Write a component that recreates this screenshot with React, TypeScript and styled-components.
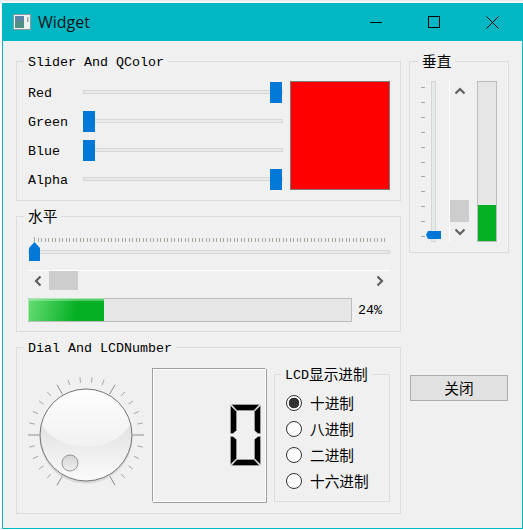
import React from "react";
import styled, { createGlobalStyle } from "styled-components";

const Global = createGlobalStyle`
  html, body { margin: 0; padding: 0; background: #fff; }
  body { font-family: "Noto Sans CJK SC", "Liberation Sans", sans-serif; color: #000; }
`;

const Page = styled.div`
  width: 523px;
  height: 530px;
  padding: 3px 0 1px 2px;
  box-sizing: border-box;
  background: linear-gradient(#e6e6e6, #fff 3px);
`;

const Window = styled.div`
  width: 521px;
  height: 526px;
  box-sizing: border-box;
  border: 1px solid #00b7c3;
  border-top: 0;
  background: #f0f0f0;
  display: flex;
  flex-direction: column;
`;

const TitleBar = styled.header`
  height: 38px;
  flex: none;
  background: #00b7c3;
  display: flex;
  align-items: center;
  padding-left: 10px;
`;

const TitleText = styled.span`
  font: 400 16px/20px "Open Sans", "Liberation Sans", sans-serif;
  margin-left: 7px;
  color: #04141a;
  flex: 1;
`;

const WinButton = styled.button`
  width: 58.5px;
  height: 38px;
  border: 0;
  padding: 0;
  background: none;
  display: flex;
  align-items: center;
  justify-content: center;
`;

const Body = styled.main`
  flex: 1;
  display: flex;
  gap: 8px;
  padding: 20px 0 0 13px;
`;

const Column = styled.div<{ $w: number; $gap?: number }>`
  width: ${(p) => p.$w}px;
  display: flex;
  flex-direction: column;
  gap: ${(p) => p.$gap ?? 0}px;
`;

const Group = styled.section<{ $h: number; $pad: string }>`
  position: relative;
  box-sizing: border-box;
  height: ${(p) => p.$h}px;
  padding: ${(p) => p.$pad};
  border: 1px solid #dcdcdc;
`;

const GroupTitle = styled.span<{ $left?: number }>`
  position: absolute;
  top: -11px;
  left: ${(p) => p.$left ?? 7}px;
  padding: 0 4px;
  height: 19px;
  line-height: 19px;
  background: #f0f0f0;
  font-size: 14.67px;
  white-space: nowrap;
`;

const Mono = styled.span`
  font-family: "Liberation Mono", monospace;
  font-weight: 400;
  font-size: 13.33px;
`;

const TitleMono = styled(Mono)`
  position: relative;
  top: -1px;
`;

const ColorRow = styled.div`
  display: flex;
  gap: 7px;
`;

const SliderStack = styled.div`
  display: flex;
  flex-direction: column;
  gap: 8px;
`;

const SliderRow = styled.div`
  display: flex;
  align-items: center;
  height: 21px;
`;

const SliderLabel = styled(Mono)`
  width: 55px;
  position: relative;
  top: 2px;
`;

const Track = styled.div`
  position: relative;
  width: 200px;
  height: 4px;
  box-sizing: border-box;
  background: #e7eaea;
  border: 1px solid #d6d6d6;
`;

const Handle = styled.div<{ $max: boolean }>`
  position: absolute;
  top: -9px;
  left: ${(p) => (p.$max ? "186px" : "-1px")};
  width: 12px;
  height: 21px;
  background: #0078d7;
`;

const Swatch = styled.div`
  width: 100px;
  height: 109px;
  box-sizing: border-box;
  background: #ff0000;
  border: 1px solid #7a7a7a;
`;

const VRow = styled.div`
  display: flex;
`;

const VSliderArt = styled.svg`
  display: block;
  flex: none;
  width: 28px;
  height: 161px;
`;

const VScroll = styled.div`
  width: 20px;
  height: 161px;
  border-left: 1px solid #fff;
  display: flex;
  flex-direction: column;
`;

const HScroll = styled.div`
  height: 20px;
  margin-top: 9px;
  border-top: 1px solid #fff;
  display: flex;
`;

const Arrow = styled.div`
  flex: none;
  width: 20px;
  height: 20px;
  display: flex;
  align-items: center;
  justify-content: center;
`;

const VTrough = styled.div`
  flex: 1;
  display: flex;
  flex-direction: column;
  justify-content: flex-end;
`;

const VThumb = styled.div`
  width: 19px;
  height: 22px;
  background: #cdcdcd;
`;

const HTrough = styled.div`
  flex: 1;
  padding-left: 1px;
`;

const HThumb = styled.div`
  width: 29px;
  height: 19px;
  background: #cdcdcd;
`;

const VBar = styled.div`
  width: 20px;
  height: 161px;
  margin-left: 7px;
  box-sizing: border-box;
  border: 1px solid #bcbcbc;
  background: #e6e6e6;
  display: flex;
  flex-direction: column;
  justify-content: flex-end;
`;

const VFill = styled.div`
  height: 36px;
  background: #06b025;
`;

const HSliderWrap = styled.div`
  position: relative;
  height: 24px;
`;

const HTicks = styled.svg`
  display: block;
  width: 362px;
  height: 6px;
`;

const HTrack = styled.div`
  position: absolute;
  left: 0;
  right: 0;
  top: 13px;
  height: 4px;
  box-sizing: border-box;
  background: #e7eaea;
  border: 1px solid #d6d6d6;
`;

const HHandle = styled.svg`
  position: absolute;
  left: 1px;
  top: 5px;
  width: 11px;
  height: 19px;
`;

const BarRow = styled.div`
  display: flex;
  align-items: center;
  margin-top: 7px;
`;

const HBar = styled.div`
  width: 324px;
  height: 24px;
  box-sizing: border-box;
  border: 1px solid #bcbcbc;
  background: #e6e6e6;
`;

const HFill = styled.div`
  width: 75px;
  height: 100%;
  background:
    linear-gradient(rgba(255, 255, 255, 0.3), rgba(255, 255, 255, 0.3) 2px, transparent 2px, transparent),
    linear-gradient(100deg, #64dc72 0%, #06b025 62%);
  box-shadow: -1px 0 0 #a9e6b0, 0 -1px 0 #a9e6b0;
`;

const BarLabel = styled(Mono)`
  margin-left: 6px;
`;

const DialRow = styled.div`
  display: flex;
  align-items: flex-start;
`;

const DialArt = styled.svg`
  display: block;
  flex: none;
  width: 120px;
  height: 120px;
  margin-top: 7px;
`;

const Lcd = styled.div`
  box-sizing: border-box;
  flex: none;
  width: 114px;
  height: 134px;
  margin-left: 6px;
  border: 1px solid;
  border-color: #a0a0a0 #fff #fff #a0a0a0;
  box-shadow: inset 1px 1px 0 #fff, 1px 1px 0 #a0a0a0;
  display: flex;
  align-items: center;
  justify-content: flex-end;
  padding-right: 4px;
`;

const Digit = styled.svg`
  display: block;
  width: 31px;
  height: 62px;
`;

const BaseGroup = styled(Group)`
  flex: none;
  width: 116px;
  margin: 6px 0 0 8px;
`;

const RadioRow = styled.label`
  display: flex;
  align-items: center;
  height: 26px;
  gap: 8px;
  font-size: 14.67px;
`;

const RadioText = styled.span`
  margin-bottom: 2px;
`;

const RadioDot = styled.span<{ $on?: boolean }>`
  box-sizing: border-box;
  flex: none;
  width: 16px;
  height: 16px;
  border-radius: 50%;
  border: 1px solid #333;
  background: ${(p) => (p.$on ? "radial-gradient(circle, #333 0 5px, #fff 5.6px)" : "#fff")};
`;

const CloseButton = styled.button`
  width: 98px;
  height: 26px;
  margin: 122px 0 0 1px;
  padding: 0 0 2px;
  box-sizing: border-box;
  background: #e1e1e1;
  border: 1px solid #adadad;
  font: 400 14.67px "Noto Sans CJK SC", sans-serif;
  color: #000;
`;

const Chevron = ({ d }: { d: string }) => (
  <svg width="12" height="12" viewBox="0 0 12 12">
    <path d={d} fill="none" stroke="#606060" strokeWidth="2.2" />
  </svg>
);
const UP = "M1.5 8.5 6 4 10.5 8.5";
const DOWN = "M1.5 3.5 6 8 10.5 3.5";
const LEFT = "M8.5 1.5 4 6 8.5 10.5";
const RIGHT = "M3.5 1.5 8 6 3.5 10.5";

const rows = [
  { label: "Red", max: true },
  { label: "Green", max: false },
  { label: "Blue", max: false },
  { label: "Alpha", max: true },
];

const pol = (deg: number, r: number) => {
  const a = ((deg - 90) * Math.PI) / 180;
  return [60 + r * Math.cos(a), 60 + r * Math.sin(a)];
};

const dialTicks = Array.from({ length: 26 }, (_, i) => {
  const deg = 210 + i * 12;
  const long = i % 5 === 0;
  const [x1, y1] = pol(deg, long ? 47 : 52.5);
  const [x2, y2] = pol(deg, 58);
  return { x1, y1, x2, y2, long };
});

const VerticalSlider = () => (
  <VSliderArt viewBox="0 0 28 161">
    {Array.from({ length: 11 }, (_, i) => (
      <rect key={i} x="0" y={Math.round(6 + i * 14.9)} width="4" height="1" fill="#a8a89a" />
    ))}
    <rect x="10.5" y="0.5" width="4" height="160" fill="#e7eaea" stroke="#d6d6d6" />
    <path d="M5 154 7 150H20V158H7Z" fill="#0078d7" />
  </VSliderArt>
);

const DigitZero = () => (
  <Digit viewBox="0 0 31 62">
    <g fill="#000" stroke="#b4b4b4" strokeWidth="0.6">
      <path d="M1.5 0.5H29.5L24 6.5H7Z" />
      <path d="M0.5 1.5 6.5 7.5V26.5L3 29.5H0.5Z" />
      <path d="M30.5 1.5 24.5 7.5V26.5L28 29.5H30.5Z" />
      <path d="M0.5 32.5H3L6.5 35.5V54.5L0.5 60.5Z" />
      <path d="M30.5 32.5H28L24.5 35.5V54.5L30.5 60.5Z" />
      <path d="M7 55.5H24L29.5 61.5H1.5Z" />
    </g>
  </Digit>
);

export default function App() {
  return (
    <Page>
      <Global />
      <Window>
        <TitleBar>
          <svg width="18" height="16" viewBox="0 0 18 16">
            <rect x="0.5" y="0.5" width="17" height="15" fill="#eef2f2" stroke="#8a9a9c" />
            <rect x="2" y="2" width="9" height="12" fill="#4f8f86" />
            <rect x="2" y="2" width="9" height="5" fill="#5c83a8" />
            <rect x="14" y="3" width="1.5" height="5" fill="#9aa6a8" />
          </svg>
          <TitleText>Widget</TitleText>
          <WinButton aria-label="min">
            <svg width="12" height="12" viewBox="0 0 12 12"><path d="M0 6.5H12" stroke="#000" /></svg>
          </WinButton>
          <WinButton aria-label="max">
            <svg width="12" height="12" viewBox="0 0 12 12"><rect x="0.5" y="0.5" width="11" height="11" fill="none" stroke="#000" /></svg>
          </WinButton>
          <WinButton aria-label="close">
            <svg width="13" height="13" viewBox="0 0 13 13"><path d="M0.5 0.5 12.5 12.5M12.5 0.5 0.5 12.5" stroke="#000" /></svg>
          </WinButton>
        </TitleBar>
        <Body>
          <Column $w={385} $gap={15}>
            <Group $h={140} $pad="19px 0 0 11px">
              <GroupTitle><TitleMono>Slider And QColor</TitleMono></GroupTitle>
              <ColorRow>
                <SliderStack>
                  {rows.map((r) => (
                    <SliderRow key={r.label}>
                      <SliderLabel>{r.label}</SliderLabel>
                      <Track><Handle $max={r.max} /></Track>
                    </SliderRow>
                  ))}
                </SliderStack>
                <Swatch />
              </ColorRow>
            </Group>
            <Group $h={116} $pad="20px 10px 0 11px">
              <GroupTitle>水平</GroupTitle>
              <HSliderWrap>
                <HTicks viewBox="0 0 362 6">
                  <rect x="6" y="0" width="1" height="5" fill="#a8a89a" />
                  {Array.from({ length: 100 }, (_, i) => (
                    <rect key={i} x={Math.round(9.5 + i * 3.5)} y="1" width="1" height="4" fill="#a8a89a" />
                  ))}
                </HTicks>
                <HTrack />
                <HHandle viewBox="0 0 11 19"><path d="M5.5 0 11 6V19H0V6Z" fill="#0078d7" /></HHandle>
              </HSliderWrap>
              <HScroll>
                <Arrow><Chevron d={LEFT} /></Arrow>
                <HTrough><HThumb /></HTrough>
                <Arrow><Chevron d={RIGHT} /></Arrow>
              </HScroll>
              <BarRow>
                <HBar><HFill /></HBar>
                <BarLabel>24%</BarLabel>
              </BarRow>
            </Group>
            <Group $h={167} $pad="20px 0 0 9px">
              <GroupTitle><TitleMono>Dial And LCDNumber</TitleMono></GroupTitle>
              <DialRow>
                <DialArt viewBox="0 0 120 120">
                  <defs>
                    <linearGradient id="face" x1="0" y1="0" x2="0" y2="1">
                      <stop offset="0.45" stopColor="#e4e4e4" />
                      <stop offset="1" stopColor="#fbfbfb" />
                    </linearGradient>
                    <linearGradient id="gloss" x1="0" y1="0" x2="0" y2="1">
                      <stop offset="0.2" stopColor="#ffffff" />
                      <stop offset="1" stopColor="#f1f1f1" />
                    </linearGradient>
                    <linearGradient id="knob" x1="0" y1="0" x2="0" y2="1">
                      <stop offset="0" stopColor="#d4d4d4" />
                      <stop offset="1" stopColor="#f0f0f0" />
                    </linearGradient>
                    <clipPath id="faceClip"><circle cx="60" cy="60" r="46" /></clipPath>
                  </defs>
                  {dialTicks.map((t, i) => (
                    <line key={i} x1={t.x1} y1={t.y1} x2={t.x2} y2={t.y2} stroke={t.long ? "#8c8c8c" : "#a6a6a6"} />
                  ))}
                  <circle cx="60" cy="62" r="46.5" fill="#cfcfcf" opacity="0.7" />
                  <circle cx="60" cy="60" r="46" fill="url(#face)" />
                  <ellipse cx="60" cy="30" rx="50" ry="42" fill="url(#gloss)" clipPath="url(#faceClip)" />
                  <circle cx="60" cy="60" r="46" fill="none" stroke="#747474" />
                  <circle cx="44" cy="88" r="8" fill="url(#knob)" stroke="#969696" />
                </DialArt>
                <Lcd><DigitZero /></Lcd>
                <BaseGroup $h={128} $pad="15px 0 0 11px">
                  <GroupTitle $left={6}><TitleMono>LCD</TitleMono>显示进制</GroupTitle>
                  <RadioRow><RadioDot $on /><RadioText>十进制</RadioText></RadioRow>
                  <RadioRow><RadioDot /><RadioText>八进制</RadioText></RadioRow>
                  <RadioRow><RadioDot /><RadioText>二进制</RadioText></RadioRow>
                  <RadioRow><RadioDot /><RadioText>十六进制</RadioText></RadioRow>
                </BaseGroup>
              </DialRow>
            </Group>
          </Column>
          <Column $w={100}>
            <Group $h={192} $pad="19px 0 0 11px">
              <GroupTitle $left={8}>垂直</GroupTitle>
              <VRow>
                <VerticalSlider />
                <VScroll>
                  <Arrow><Chevron d={UP} /></Arrow>
                  <VTrough><VThumb /></VTrough>
                  <Arrow><Chevron d={DOWN} /></Arrow>
                </VScroll>
                <VBar><VFill /></VBar>
              </VRow>
            </Group>
            <CloseButton>关闭</CloseButton>
          </Column>
        </Body>
      </Window>
    </Page>
  );
}
